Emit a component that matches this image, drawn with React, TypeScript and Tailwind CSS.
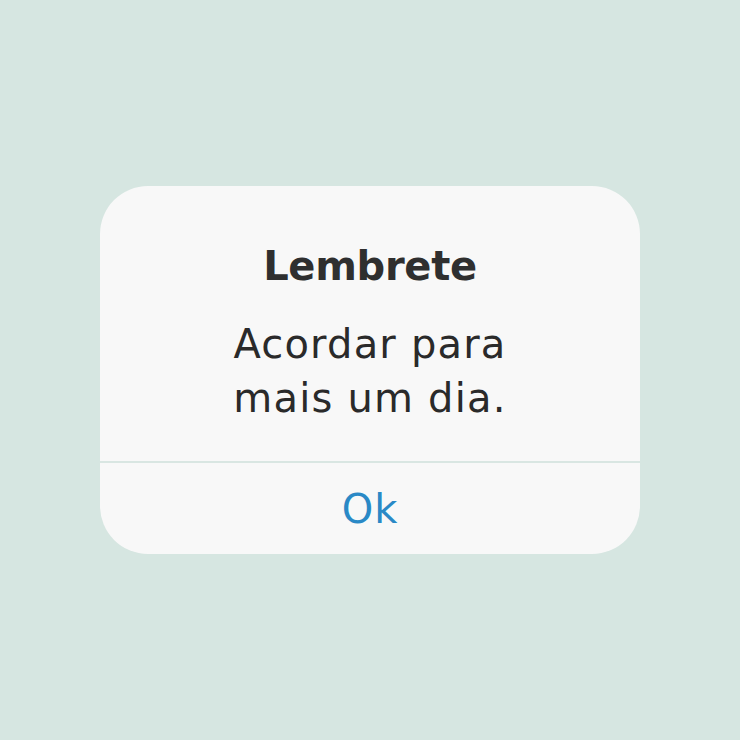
import React from "react";

export default function App() {
  return (
    <div
      className="w-[740px] h-[740px] bg-[#d6e6e1] flex items-center justify-center"
      style={{ fontFamily: "'DejaVu Sans', Lato, sans-serif" }}
    >
      <div className="w-[540px] h-[368px] bg-[#f8f8f8] rounded-[48px] flex flex-col overflow-hidden">
        <div className="h-[275px] flex flex-col items-center pt-[56px]">
          <div className="text-[40px] leading-[48px] font-bold text-[#2f2f2f] tracking-[-0.3px]">
            Lembrete
          </div>
          <div className="mt-[27px] text-[40px] leading-[54px] font-normal text-[#2a2a2a] text-center tracking-[1.2px]">
            Acordar para
            <br />
            mais um dia.
          </div>
        </div>
        <div className="h-[2px] bg-[#d9e6e2]" />
        <div className="flex-1 flex items-center justify-center">
          <span className="text-[40px] leading-[48px] text-[#2a89c6] tracking-[1px]">Ok</span>
        </div>
      </div>
    </div>
  );
}
